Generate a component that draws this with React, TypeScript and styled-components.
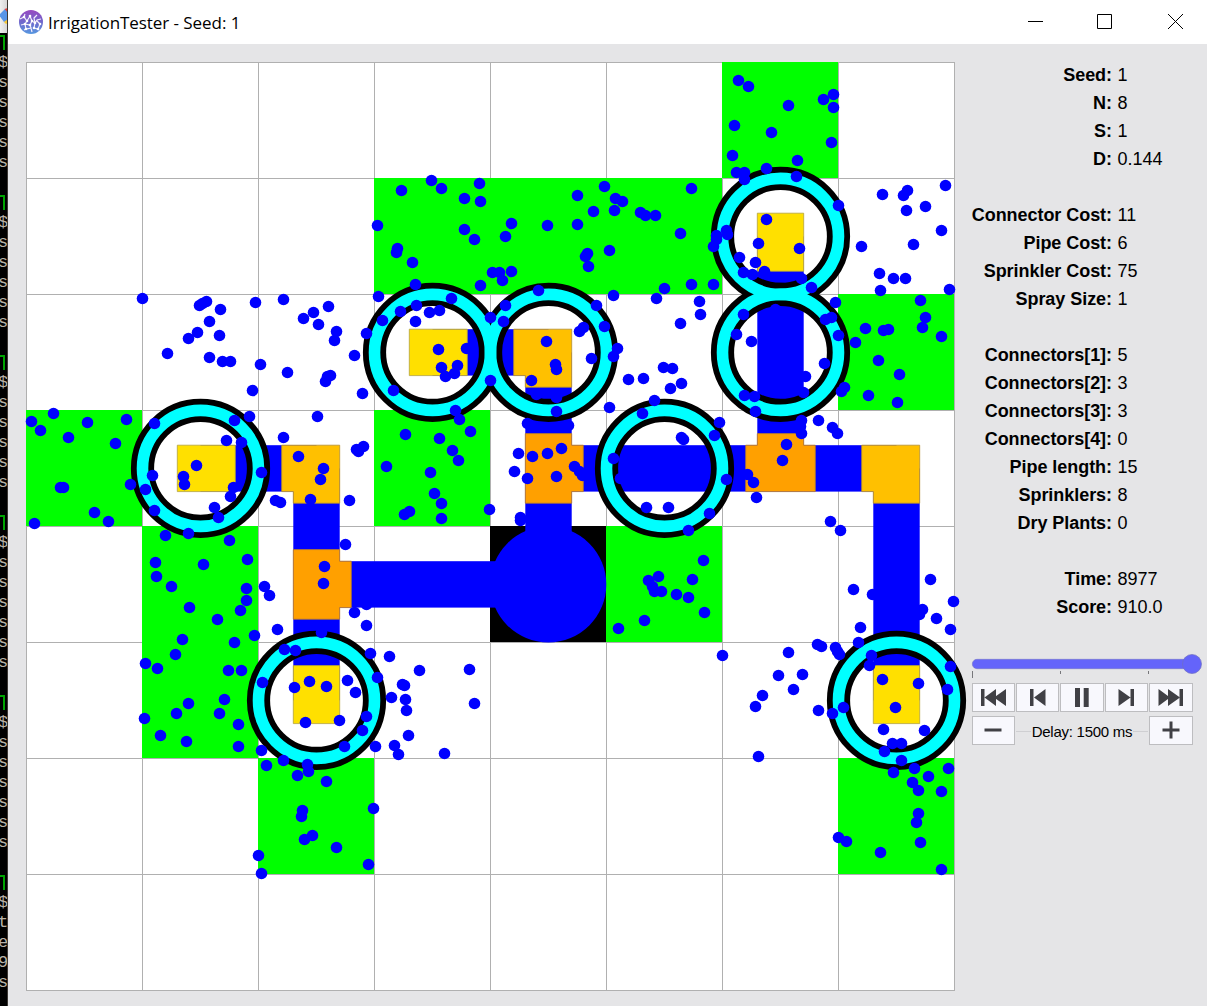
import React from "react";
import styled, { createGlobalStyle } from "styled-components";

const GlobalStyle = createGlobalStyle`
  html, body { margin: 0; padding: 0; }
  body { width: 1207px; height: 1006px; overflow: hidden; background: #e5e5e7; }
  * { box-sizing: border-box; }
`;

const Desktop = styled.div`
  display: flex;
  width: 1207px;
  height: 1006px;
  overflow: hidden;
  font-family: "Liberation Sans", Arial, sans-serif;
`;

const TerminalEdge = styled.div`
  flex: 0 0 8px;
  height: 1006px;
  overflow: hidden;
  background: #000;
  border-right: 1px solid #3c3834;
`;

const TerminalTitle = styled.div`
  height: 33px;
  background: linear-gradient(90deg, #efefef, #d6d6d6);
  overflow: hidden;
  svg { display: block; }
`;

const TerminalLine = styled.div`
  height: 20px;
  line-height: 19px;
  margin-left: -2px;
  font-family: "Liberation Mono", monospace;
  font-size: 17px;
  color: #b8b2a8;
  white-space: pre;
`;

const PromptCorner = styled.div`
  width: 5px;
  height: 15px;
  margin: 2px 0 3px;
  border-top: 2px solid #00a400;
  border-right: 2px solid #00a400;
`;

const Window = styled.div`
  flex: 1;
  display: flex;
  flex-direction: column;
  background: #e5e5e7;
`;

const TitleBar = styled.header`
  display: flex;
  align-items: center;
  height: 44px;
  padding-left: 11px;
  background: #fff;
`;

const Title = styled.div`
  flex: 1;
  margin-left: 5px;
  font-family: "Open Sans", "Noto Sans", sans-serif;
  font-size: 17px;
  letter-spacing: -0.06px;
  color: #000;
  white-space: nowrap;
`;

const WindowControls = styled.div`
  display: flex;
  svg { display: block; width: 70px; height: 44px; }
  svg:last-child { width: 66px; }
`;

const Content = styled.main`
  display: flex;
  align-items: flex-start;
  padding: 18px 0 0 18px;
`;

const BoardSvg = styled.svg`
  display: block;
  flex: none;
  overflow: visible;
`;

const Panel = styled.aside`
  flex: none;
  width: 236px;
  margin-left: 17px;
`;

const Stats = styled.dl`
  margin: 0;
`;

const StatRow = styled.div<{ $gap?: boolean }>`
  display: grid;
  grid-template-columns: 140px 1fr;
  column-gap: 5.500px;
  height: 28px;
  line-height: 27px;
  font-size: 18px;
  margin-top: ${(p) => (p.$gap ? "28px" : "0")};
  white-space: nowrap;
  color: #000;
`;

const StatLabel = styled.dt`
  font-weight: bold;
  letter-spacing: -0.05px;
  display: flex;
  justify-content: flex-end;
`;

const StatValue = styled.dd`
  margin: 0;
`;

const Slider = styled.div`
  height: 30px;
  margin-top: 32px;
  margin-bottom: -1px;
  svg { display: block; overflow: visible; }
`;

const ButtonRow = styled.div`
  display: flex;
  gap: 1px;
  margin-bottom: 4px;
`;

const ControlButton = styled.button<{ $w: number }>`
  display: flex;
  align-items: center;
  justify-content: flex-start;
  width: ${(p) => p.$w}px;
  height: 29px;
  padding: 0;
  border: 1px solid #bdbdc0;
  border-radius: 0;
  background: #f8f8fd;
  svg { display: block; flex: none; margin-left: -1px; }
`;

const DelayLabel = styled.div`
  flex: none;
  display: flex;
  align-items: center;
  width: 132px;
  height: 31px;
  gap: 1px;
  font-size: 15px;
  letter-spacing: -0.26px;
  white-space: nowrap;
  &::before, &::after {
    content: "";
    flex: 1;
    height: 1px;
    background: #cfcfd2;
  }
`;

const CELL = 116;
const X0 = 26;
const Y0 = 62;

const plants: [number, number][] = [
  [6, 0], [3, 1], [4, 1], [5, 1], [7, 2], [0, 3], [3, 3],
  [1, 4], [5, 4], [1, 5], [2, 6], [7, 6],
];

const sprinklers: [number, number][] = [
  [1, 3], [3, 2], [4, 2], [5, 3], [6, 1], [6, 2], [2, 5], [7, 5],
];

const pipes: [number, number, number, number][] = [
  [4, 4, 2, 4], [2, 4, 2, 3], [2, 3, 1, 3], [2, 4, 2, 5],
  [4, 4, 4, 2], [4, 2, 3, 2], [4, 3, 7, 3], [6, 3, 6, 1], [7, 3, 7, 5],
];

const connectors: [number, number, string][] = [
  [1, 3, "R"], [3, 2, "R"], [6, 1, "D"], [2, 5, "U"], [7, 5, "U"],
  [2, 3, "LD"], [4, 2, "LD"], [7, 3, "LD"],
  [2, 4, "URD"], [4, 3, "URD"], [6, 3, "LUR"],
];

const connectorFill = ["#ffe000", "#ffc000", "#ffa000"];
const connectorEdge = ["#b3a13d", "#b38f32", "#b37a32"];

const drops: number[][] = [
  [142,298],[199,305],[202,303],[206,301],[220,309],[255,302],[283,299],[209,321],[197,332],[188,338],[219,335],[167,353],
  [209,357],[222,361],[230,361],[260,364],[287,372],[252,390],[249,416],[303,318],[313,312],[328,306],[318,324],[336,331],
  [334,340],[354,355],[366,333],[327,376],[330,375],[325,381],[362,393],[317,416],[283,437],[378,296],[382,320],[234,420],
  [226,440],[241,442],[154,423],[196,465],[183,476],[184,484],[152,475],[145,489],[261,472],[154,510],[233,487],[230,496],
  [214,507],[218,517],[188,533],[298,456],[323,468],[320,479],[310,499],[275,500],[280,502],[349,500],[356,449],[358,451],
  [363,446],[130,484],
  [401,190],[431,180],[441,188],[479,183],[464,198],[480,201],[577,195],[604,186],[593,211],[614,210],[615,198],[377,225],
  [464,229],[474,239],[511,223],[505,236],[547,225],[577,224],[609,250],[397,248],[396,252],[412,262],[492,272],[499,272],
  [511,271],[502,280],[480,285],[587,253],[585,256],[588,266],[415,284],[451,298],[538,290],[505,305],[596,305],[613,295],
  [416,305],[400,311],[429,312],[439,310],[415,321],[490,317],[503,321],[583,327],[579,331],[604,326],[438,349],[466,348],
  [546,341],[591,358],[613,356],[617,348],[441,367],[457,365],[454,373],[445,376],[555,364],[556,369],[490,380],[531,380],
  [393,390],[536,394],[556,397],[455,410],[556,411],[609,407],[459,419],[527,423],[568,425],
  [622,201],[640,212],[645,215],[655,215],[691,188],[680,233],[716,235],[716,239],[713,246],[726,230],[727,234],[736,172],
  [744,172],[744,179],[766,168],[796,176],[838,205],[766,219],[758,243],[799,248],[739,257],[755,262],[743,272],[752,274],
  [764,271],[801,278],[811,287],[713,284],[691,284],[664,288],[656,298],[699,301],[700,314],[680,323],[663,367],[672,368],
  [643,378],[628,379],[681,383],[670,388],[654,400],[642,413],[719,422],[743,314],[775,309],[736,334],[751,341],[835,302],
  [831,317],[825,319],[838,335],[824,363],[805,376],[803,392],[844,387],[841,391],[744,395],[754,396],[755,411],[801,420],[818,420],
  [738,80],[748,86],[788,105],[823,99],[833,94],[833,107],[734,125],[771,132],[831,142],[732,155],[797,160],[882,194],
  [907,190],[903,195],[945,185],[925,206],[906,210],[941,230],[913,244],[861,246],[879,273],[893,278],[905,278],[880,290],
  [949,289],[920,300],[865,328],[883,330],[888,329],[878,360],[899,374],[855,342],[868,395],[897,402],[922,327],[925,317],[941,336],
  [165,535],[229,540],[155,562],[156,576],[203,564],[247,559],[171,586],[189,607],[246,588],[246,600],[240,610],[217,619],
  [264,586],[269,595],[254,635],[277,629],[182,639],[234,642],[175,654],[145,663],[157,668],[228,670],[241,670],[224,699],
  [188,703],[176,713],[219,713],[144,718],[160,735],[238,724],[238,746],[186,741],[261,750],[266,765],[283,760],[307,764],
  [284,649],[295,650],[321,632],[262,682],[294,687],[309,681],[326,686],[347,680],[355,692],[305,722],[339,720],[366,716],
  [362,730],[344,746],[375,746],[377,677],[370,653],[345,544],[324,566],[323,583],[354,612],[366,625],[366,604],
  [405,434],[439,438],[470,431],[452,450],[458,460],[386,466],[430,472],[434,493],[441,503],[441,518],[409,511],[404,514],
  [489,509],[518,453],[532,456],[547,453],[561,448],[514,471],[527,478],[556,476],[574,466],[579,471],[582,475],[520,517],[520,520],
  [853,589],[872,594],[930,579],[953,601],[922,609],[919,614],[936,618],[950,629],[860,627],[858,642],[821,646],[835,647],
  [837,651],[839,654],[871,655],[869,665],[950,666],[947,689],[882,679],[918,683],[895,707],[843,707],[832,713],[818,710],
  [883,729],[924,730],[892,743],[901,743],[884,751],[901,760],[893,772],[914,768],[948,768],[928,776],[912,782],[918,790],
  [941,791],[918,813],[916,822],[920,842],[838,837],[846,841],[880,852],[941,869],
  [31,421],[53,413],[40,430],[87,422],[126,419],[115,443],[68,437],[60,487],[63,487],[94,512],[108,521],[34,523],
  [297,775],[326,781],[308,771],[302,810],[301,816],[312,835],[304,839],[336,847],[373,808],[368,864],[258,855],[261,873],
  [389,656],[419,670],[469,669],[474,703],[402,684],[404,685],[391,697],[405,699],[406,710],[408,735],[394,745],[398,754],[444,753],
  [658,576],[648,580],[652,586],[692,579],[703,560],[654,591],[661,591],[676,594],[688,597],[704,612],[644,620],[618,628],
  [714,435],[681,437],[683,439],[613,458],[620,478],[726,479],[646,507],[668,507],[709,513],[688,530],
  [747,474],[753,482],[756,497],[800,426],[832,427],[837,433],[786,444],[782,460],[801,433],[830,521],[840,530],
  [722,655],[788,652],[802,674],[778,675],[762,695],[793,689],[755,706],[758,756],[817,644],
];

const cx = (i: number) => X0 + 0.5 + CELL * (i + 0.5);
const cy = (i: number) => Y0 + 0.4 + CELL * (i + 0.5);

// Outline of the hub of a connector, with one short arm for each direction.
function connectorPath(dirs: string) {
  const h = CELL * 0.2;
  const a = CELL * 0.3;
  const pts: [number, number][] = [[-h, -h]];
  if (dirs.includes("U")) pts.push([-h, -a], [h, -a]);
  pts.push([h, -h]);
  if (dirs.includes("R")) pts.push([a, -h], [a, h]);
  pts.push([h, h]);
  if (dirs.includes("D")) pts.push([h, a], [-h, a]);
  pts.push([-h, h]);
  if (dirs.includes("L")) pts.push([-a, h], [-a, -h]);
  return "M" + pts.map((p) => p.join(" ")).join("L") + "Z";
}

function Board() {
  const lines = Array.from({ length: 9 }, (_, i) => i * CELL);
  const h = CELL * 0.2;
  return (
    <BoardSvg width={929} height={929} viewBox={`${X0} ${Y0} 929 929`}>
      <rect x={X0} y={Y0} width={929} height={929} fill="#fff" />
      <g fill="#b0b0b0">
        {lines.map((d) => (
          <g key={d}>
            <rect x={X0 + d} y={Y0} width={1} height={929} />
            <rect x={X0} y={Y0 + d} width={929} height={1} />
          </g>
        ))}
      </g>
      <g fill="#00ff00">
        {plants.map(([x, y]) => (
          <rect key={`${x}-${y}`} x={X0 + x * CELL} y={Y0 + y * CELL} width={CELL} height={CELL} />
        ))}
      </g>
      <rect x={X0 + 4 * CELL} y={Y0 + 4 * CELL} width={CELL} height={CELL} fill="#000" />
      <g fill="#0000ff">
        <circle cx={cx(4) - 0.2} cy={cy(4)} r={58} />
        {pipes.map(([x1, y1, x2, y2]) => (
          <rect
            key={`${x1}${y1}${x2}${y2}`}
            x={Math.min(cx(x1), cx(x2)) - (y1 === y2 ? 0 : h)}
            y={Math.min(cy(y1), cy(y2)) - (x1 === x2 ? 0 : h)}
            width={x1 === x2 ? 2 * h : Math.abs(x1 - x2) * CELL}
            height={y1 === y2 ? 2 * h : Math.abs(y1 - y2) * CELL}
          />
        ))}
      </g>
      {connectors.map(([x, y, dirs]) => (
        <path
          key={`${x}-${y}`}
          d={connectorPath(dirs)}
          transform={`translate(${cx(x)} ${cy(y)})`}
          fill={connectorFill[dirs.length - 1]}
          stroke={connectorEdge[dirs.length - 1]}
          strokeWidth={0.8}
        />
      ))}
      <g fill="none" stroke="#000" strokeWidth={CELL * 0.2}>
        {sprinklers.map(([x, y]) => (
          <circle key={`${x}-${y}`} cx={cx(x)} cy={cy(y)} r={CELL / 2} />
        ))}
      </g>
      <g fill="none" stroke="#00ffff" strokeWidth={CELL * 0.1}>
        {sprinklers.map(([x, y]) => (
          <circle key={`${x}-${y}`} cx={cx(x)} cy={cy(y)} r={CELL / 2} />
        ))}
      </g>
      <g fill="#0000ff">
        {drops.map(([x, y], i) => (
          <circle key={i} cx={x + 0.5} cy={y + 0.5} r={5.8} />
        ))}
      </g>
    </BoardSvg>
  );
}

const AppIcon = () => (
  <svg width="24" height="24" viewBox="0 0 24 24">
    <defs>
      <linearGradient id="orb" x1="0" y1="0" x2="0" y2="1">
        <stop offset="0" stopColor="#9848c0" />
        <stop offset="0.5" stopColor="#7068cc" />
        <stop offset="1" stopColor="#5698e0" />
      </linearGradient>
    </defs>
    <circle cx="12" cy="12" r="12" fill="url(#orb)" />
    <g fill="none" stroke="#f4eefc" strokeWidth="1.200">
      <path d="M1 9l4-2 3 4 3-5 2 5 3 2 2-3 4-1M5 7l1-3M13 11l-2 4-5-1-4 1M8 11l-2 3 1 5 5-1-1-3M16 13l-1 5 4 1 2-5-3-3M12 18l1 4M7 19l-2 1M16 13l-1-5 3-3M19 19l1 1" />
    </g>
    <g fill="#fff">
      {[[5,7],[8,11],[11,6],[16,13],[6,14],[7,19],[11,15],[15,18],[19,19],[21,14],[13,11]].map(([x, y]) => (
        <circle key={`${x}${y}`} cx={x} cy={y} r="1.300" />
      ))}
    </g>
  </svg>
);

type Stat = [string, string, boolean?];
const stats: Stat[] = [
  ["Seed:", "1"], ["N:", "8"], ["S:", "1"], ["D:", "0.144"],
  ["Connector Cost:", "11", true], ["Pipe Cost:", "6"], ["Sprinkler Cost:", "75"], ["Spray Size:", "1"],
  ["Connectors[1]:", "5", true], ["Connectors[2]:", "3"], ["Connectors[3]:", "3"], ["Connectors[4]:", "0"],
  ["Pipe length:", "15"], ["Sprinklers:", "8"], ["Dry Plants:", "0"],
  ["Time:", "8977", true], ["Score:", "910.0"],
];

const terminal = "^$sssss ^$sssss ^$sssss ^$ssssss ^$ssssss ^$te9s".split("");

const playback: [number, string][] = [
  [43, "M9 6h3.500v17H9zM12.500 14.500L24 6v17zM22 14.500L34 6v17z"],
  [43, "M14 6h3.500v17h-3.500zM18 14.500L29.500 6v17z"],
  [44, "M15 5h5v19h-5zM23.700 5h5v19h-5z"],
  [43, "M13.500 6v17l12-8.500zM25.500 6h3.500v17h-3.500z"],
  [44, "M9.500 6v17l11.500-8.500zM19 6v17l12-8.500zM30.500 6H34v17h-3.500z"],
];

export default function App() {
  return (
    <Desktop>
      <GlobalStyle />
      <TerminalEdge>
        <TerminalTitle>
          <svg width="8" height="33" viewBox="0 0 8 33">
            <path d="M-1 15L5 9l3 3v9l-4 1z" fill="#5795e8" />
            <path d="M4.500 9l3.500-1v5z" fill="#e33f3b" />
            <path d="M4 22l4-3v4l-2 1z" fill="#f7c832" />
          </svg>
        </TerminalTitle>
        {terminal.map((c, i) =>
          c === "^" ? <PromptCorner key={i} /> : <TerminalLine key={i}>{c}</TerminalLine>
        )}
      </TerminalEdge>
      <Window>
        <TitleBar>
          <AppIcon />
          <Title>IrrigationTester - Seed: 1</Title>
          <WindowControls>
            <svg viewBox="0 0 70 44"><path d="M26 21.500h15" stroke="#000" /></svg>
            <svg viewBox="0 0 70 44"><path d="M25.500 14.500h14v14h-14z" fill="none" stroke="#000" /></svg>
            <svg viewBox="0 0 66 44"><path d="M26 14l15 15M41 14L26 29" stroke="#000" /></svg>
          </WindowControls>
        </TitleBar>
        <Content>
          <Board />
          <Panel>
            <Stats>
              {stats.map(([label, value, gap]) => (
                <StatRow key={label} $gap={gap}>
                  <StatLabel>{label}</StatLabel>
                  <StatValue>{value}</StatValue>
                </StatRow>
              ))}
            </Stats>
            <Slider>
              <svg width="230" height="30" viewBox="0 0 230 30">
                <rect x="0.300" y="5.300" width="226" height="9.400" rx="4.700" fill="#6464fa" stroke="#7474c8" strokeWidth="0.600" />
                <circle cx="220" cy="10" r="9.500" fill="#6464fa" stroke="#7070c0" strokeWidth="0.700" />
                <path d="M0.500 17v7M88.500 17v3M176.500 17v3" stroke="#77777b" />
              </svg>
            </Slider>
            <ButtonRow>
              {playback.map(([w, d], i) => (
                <ControlButton key={i} $w={w}>
                  <svg width="43" height="29" viewBox="0 0 43 29"><path d={d} fill="#404045" /></svg>
                </ControlButton>
              ))}
            </ButtonRow>
            <ButtonRow>
              <ControlButton $w={43}>
                <svg width="43" height="29" viewBox="0 0 43 29"><path d="M12.500 12.500h17v3h-17z" fill="#404045" /></svg>
              </ControlButton>
              <DelayLabel>Delay: 1500 ms</DelayLabel>
              <ControlButton $w={44}>
                <svg width="43" height="29" viewBox="0 0 43 29"><path d="M13.500 12.500h17v3h-17zM20.500 5.500h3v17h-3z" fill="#404045" /></svg>
              </ControlButton>
            </ButtonRow>
          </Panel>
        </Content>
      </Window>
    </Desktop>
  );
}
